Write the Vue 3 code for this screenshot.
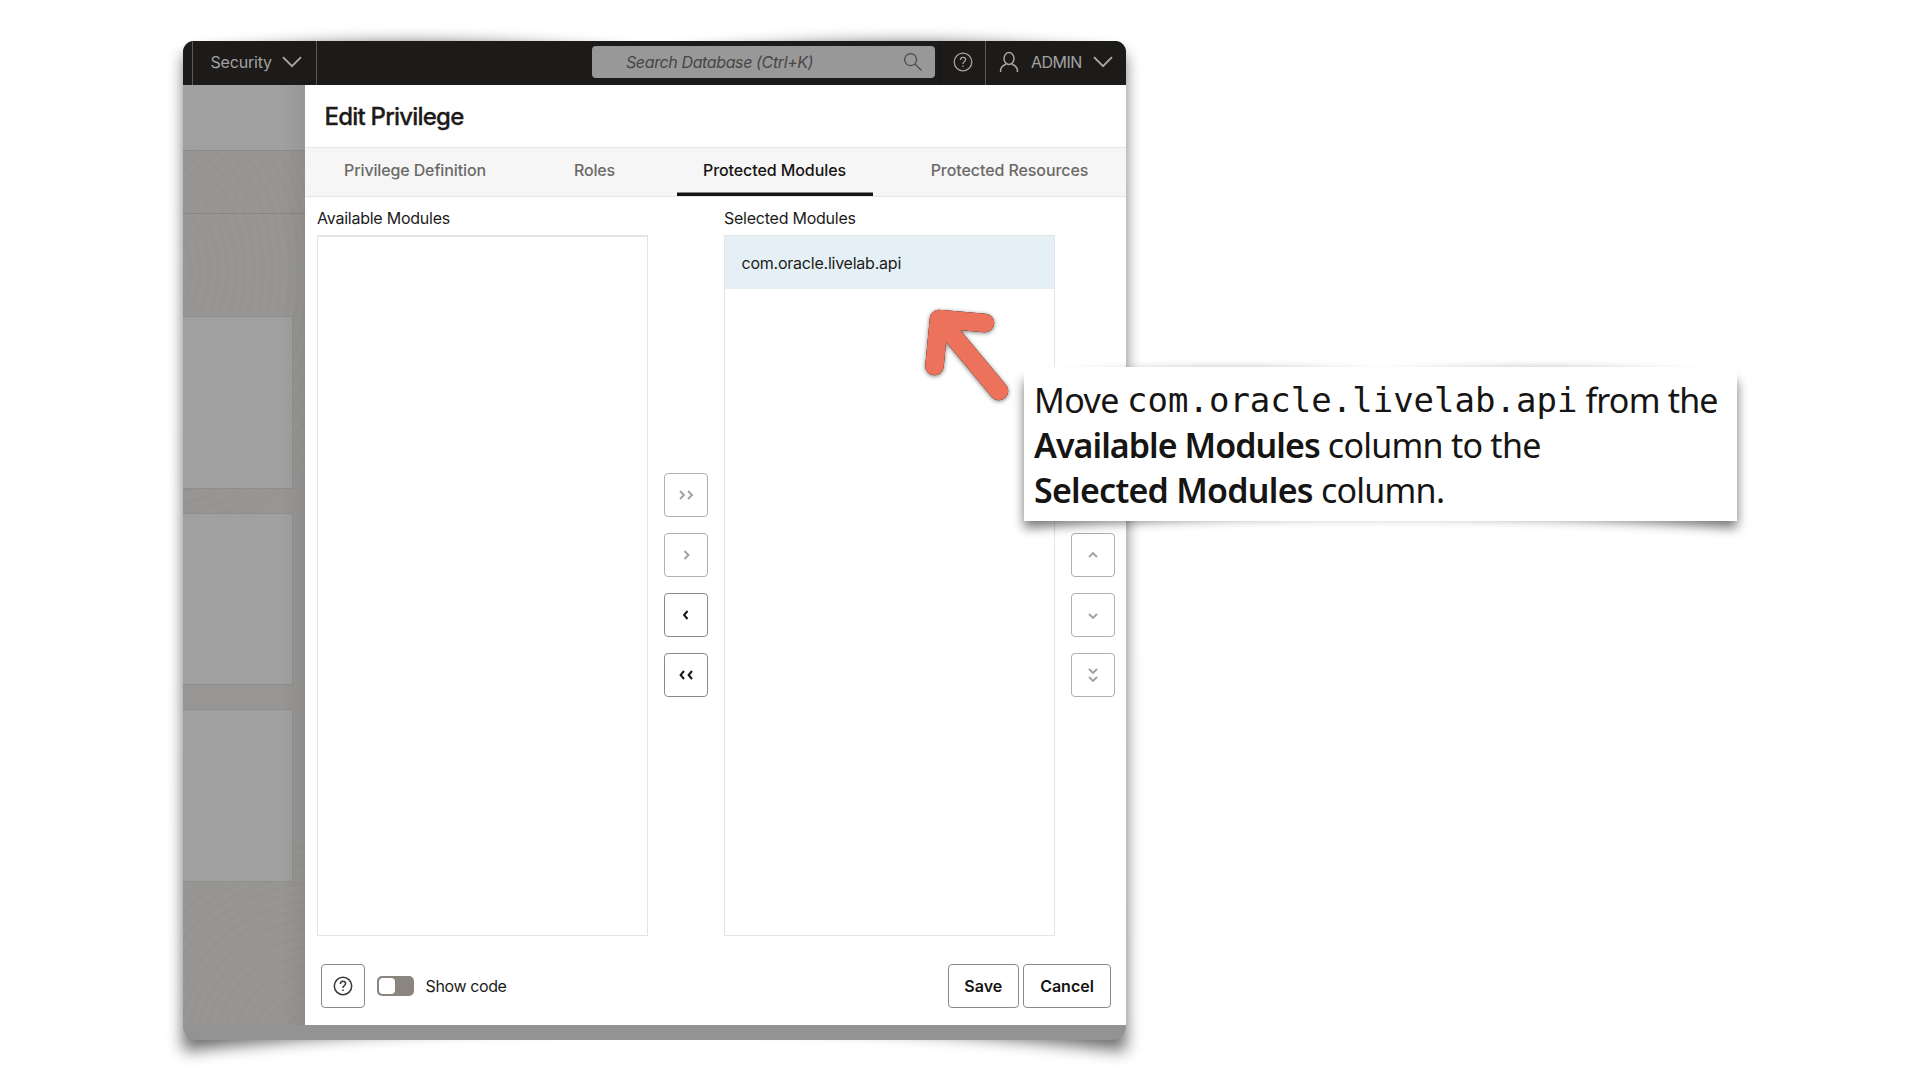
<script setup>
const tabs = [
  { label: 'Privilege Definition', cls: 'definition' },
  { label: 'Roles', cls: 'roles' },
  { label: 'Protected Modules', cls: 'modules' },
  { label: 'Protected Resources', cls: 'resources' },
]
const moveButtons = [
  { name: 'Move all right', paths: ['M-6-4l4 4-4 4', 'M2-4l4 4-4 4'], on: false },
  { name: 'Move right', paths: ['M-1.5-4l4 4-4 4'], on: false },
  { name: 'Move left', paths: ['M1.5-4l-3.4 4 3.4 4'], on: true },
  { name: 'Move all left', paths: ['M-2-4l-3.4 4 3.4 4', 'M6-4l-3.4 4 3.4 4'], on: true },
]
const orderButtons = [
  { name: 'Move to top', paths: ['M-4-2l4-4 4 4', 'M-4 6l4-4 4 4'] },
  { name: 'Move up', paths: ['M-4 2l4-4 4 4'] },
  { name: 'Move down', paths: ['M-4-1l4 4 4-4'] },
  { name: 'Move to bottom', paths: ['M-4-6l4 4 4-4', 'M-4 2l4 4 4-4'] },
]
const rings = Array.from({ length: 22 }, (_, i) => 20 + i * 9)
</script>

<template>
  <main class="stage">
    <svg class="shadow" width="1003" height="1064" viewBox="-30 -30 1003 1064">
      <defs>
        <filter id="soft" x="-10%" y="-10%" width="120%" height="120%"><feGaussianBlur stdDeviation="8" /></filter>
      </defs>
      <path d="M1 14Q236-12 472 16Q708-12 942 14L943 1010Q472 956 0 1010Z" fill="#000" opacity=".58" filter="url(#soft)" />
    </svg>
    <section class="window">
      <header class="topbar">
        <div class="security">
          <span>Security</span>
          <svg class="chev" width="20" height="12" viewBox="0 0 20 12"><path d="M1 1.2l9 9 9-9" /></svg>
        </div>
        <div class="search">
          <span>Search Database (Ctrl+K)</span>
          <svg width="20" height="20" viewBox="0 0 20 20"><circle cx="7.6" cy="7.6" r="6" /><path d="M12 12l6.5 6.5" /></svg>
        </div>
        <div class="help">
          <svg width="22" height="22" viewBox="0 0 22 22"><circle cx="11" cy="11" r="8.8" /><path d="M8.4 9q0-2.7 2.6-2.7t2.6 2.3q0 1.3-1.3 2.1T11 13.1M11 14.6v1.5" /></svg>
        </div>
        <div class="user">
          <svg width="20" height="22" viewBox="0 0 20 22"><ellipse cx="10" cy="7.6" rx="5" ry="6" /><path d="M1.6 21v-1.6q0-4 5.4-6.2M18.4 21v-1.6q0-4-5.4-6.2" /></svg>
          <span>ADMIN</span>
          <svg class="chev" width="20" height="12" viewBox="0 0 20 12"><path d="M1 1.2l9 9 9-9" /></svg>
        </div>
      </header>
      <div class="body">
        <aside class="backdrop">
          <svg class="texture" width="122" height="876" viewBox="0 0 122 876">
            <g v-for="(r, i) in rings" :key="i">
              <ellipse cx="-30" cy="120" :rx="r" :ry="r * 1.3" />
              <circle cx="140" cy="905" :r="r" />
            </g>
          </svg>
          <div class="band"></div>
          <div class="crumbs"></div>
          <div class="cards"><i></i><i></i><i></i></div>
        </aside>
        <section class="dialog">
          <h1><span>Edit Privilege</span></h1>
          <nav>
            <a v-for="t in tabs" :key="t.label" :class="t.cls"><span>{{ t.label }}</span></a>
          </nav>
          <div class="shuttle">
            <div class="column">
              <label>Available Modules</label>
              <div class="list first"></div>
            </div>
            <div class="controls">
              <button v-for="b in moveButtons" :key="b.name" :class="{ off: !b.on }" :aria-label="b.name">
                <svg width="24" height="24" viewBox="-12 -12 24 24"><path v-for="p in b.paths" :key="p" :d="p" /></svg>
              </button>
            </div>
            <div class="column">
              <label>Selected Modules</label>
              <div class="list"><div class="item"><span>com.oracle.livelab.api</span></div></div>
            </div>
            <div class="controls">
              <button v-for="b in orderButtons" :key="b.name" class="off" :aria-label="b.name">
                <svg width="24" height="24" viewBox="-12 -12 24 24"><path v-for="p in b.paths" :key="p" :d="p" /></svg>
              </button>
            </div>
          </div>
          <footer>
            <button class="info" aria-label="Help">
              <svg width="22" height="22" viewBox="0 0 22 22"><circle cx="11" cy="11" r="8.7" /><path d="M8.4 9q0-2.7 2.6-2.7t2.6 2.3q0 1.3-1.3 2.1T11 13.1M11 14.6v1.5" /></svg>
            </button>
            <div class="toggle"><i></i></div>
            <span class="show">Show code</span>
            <button class="save"><span>Save</span></button>
            <button class="cancel"><span>Cancel</span></button>
          </footer>
        </section>
      </div>
    </section>

    <svg class="arrow" width="100" height="110" viewBox="915 300 100 110">
      <path d="M999 391L939 319M985 323L939 319L934.5 366" />
    </svg>

    <div class="callout">
      <svg class="note-shadow" width="773" height="214" viewBox="-30 -30 773 214">
        <defs>
          <filter id="noteSoft" x="-10%" y="-20%" width="120%" height="140%"><feGaussianBlur stdDeviation="6" /></filter>
        </defs>
        <path d="M0 14Q178-4 356 10Q534-4 713 14L713 161Q356 136 0 161Z" fill="#000" opacity=".55" filter="url(#noteSoft)" />
      </svg>
      <div class="note">
        <p><span class="n1">Move </span><code>com.oracle.livelab.api</code><span class="n2"> from the</span></p>
        <p><b class="b1">Available Modules</b><span class="n3"> column to the</span></p>
        <p><b class="b2">Selected Modules</b><span class="n3"> column.</span></p>
      </div>
    </div>
  </main>
</template>

<style>
body { margin: 0; background: #fff; overflow: hidden; }
</style>

<style scoped>
* { box-sizing: border-box; }
.stage { position: relative; width: 1920px; height: 1080px; padding: 41px 0 0 183px; overflow: hidden; background: #fff; font: 16px/20px Inter, "Liberation Sans", sans-serif; color: #1c1b19; }
span, label, b, code { white-space: nowrap; }
svg { display: block; flex: none; fill: none; }
.shadow { position: absolute; left: 153px; top: 11px; }
.window { position: relative; width: 943px; height: 999px; border-radius: 11px 11px 14px 14px; overflow: hidden; display: flex; flex-direction: column; background: #939393; }
.topbar { height: 43.5px; flex: none; display: flex; align-items: center; padding-bottom: 1px; background: #1c1b19; color: #a3a2a1; margin-left: 9px; box-shadow: -9px 0 0 #1c1b19; }
.chev { stroke: #a9a8a7; stroke-width: 1.9; }
.security { width: 125px; height: 43.5px; margin-bottom: -1px; padding-bottom: 1px; display: flex; align-items: center; padding-left: 17.5px; border: solid #5a5957; border-width: 0 1px; }
.security span { width: 71.5px; letter-spacing: -.2px; }
.search { width: 343px; height: 32px; margin-left: 275px; padding: 0 12px 0 34px; border-radius: 4px; display: flex; align-items: center; justify-content: space-between; background: #989898; color: #474645; font-style: italic; letter-spacing: -.38px; }
.search svg { stroke: #4c4b4a; stroke-width: 1.3; }
.help { width: 46px; height: 43.5px; margin: 0 0 -1px 5px; padding: 0 0 1px 1px; border: solid #5a5957; border-width: 0 1px 0 0; box-shadow: inset 1px 0 #151412; display: grid; place-items: center; }
.help svg { stroke: #a3a2a1; stroke-width: 1.3; }
.user { display: flex; align-items: center; padding-left: 13px; }
.user svg { stroke: #a9a8a7; stroke-width: 1.5; }
.user span { width: 62px; margin-left: 12px; letter-spacing: -.5px; }
.user .chev { stroke-width: 1.9; }
.body { height: 940.5px; flex: none; display: flex; }
.backdrop { position: relative; width: 121.5px; flex: none; background: #979694; overflow: hidden; }
.backdrop::after { content: ""; position: absolute; inset: 0 0 0 auto; width: 24px; background: linear-gradient(90deg, transparent, rgba(0,0,0,.06)); }
.texture { position: absolute; left: 0; top: 65px; stroke: #959491; stroke-width: 3; }
.band { position: relative; height: 66.5px; background: #a0a0a0; border-bottom: 1px solid #8d8c8a; }
.crumbs { position: relative; height: 63px; border-bottom: 1px solid #878684; }
.cards { position: relative; padding-top: 102px; display: flex; flex-direction: column; gap: 24px; }
.cards i { width: 110px; height: 172.5px; background: #a0a0a0; border: solid #8f8e8d; border-width: 1px 1px 1px 0; }
.dialog { width: 821.5px; background: #fff; display: flex; flex-direction: column; }
h1 { margin: 0; height: 62px; padding: 17px 0 0 20px; font-size: 24px; line-height: 30px; font-weight: 500; letter-spacing: -.78px; -webkit-text-stroke: .3px; }
nav { height: 50px; display: flex; align-items: flex-start; background: #f6f6f6; border: solid #e6e6e6; border-width: 1px 0; font-weight: 500; color: #6b6a68; }
nav a { height: 48px; padding-top: 12px; display: flex; justify-content: center; letter-spacing: -.13px; }
.definition { width: 221px; }
.roles { width: 138px; }
.modules { width: 196px; margin-left: 13px; color: #161513; box-shadow: inset 0 -3.5px #161513; letter-spacing: -.08px; }
.resources { width: 196px; margin-left: 39px; letter-spacing: -.08px; }
.shuttle { height: 740px; padding: 16px 0 0 12.5px; display: flex; }
.column { width: 331px; flex: none; display: flex; flex-direction: column; }
.column label { height: 22px; line-height: 10px; letter-spacing: -.24px; }
.list { height: 701px; border: 1px solid #e4e4e4; }
.first { border-top-width: 2px; }
.item { height: 53px; padding: 17px 0 0 16.5px; background: #e4f0f5; letter-spacing: -.23px; }
.controls { width: 76px; flex: none; padding-top: 260px; display: flex; flex-direction: column; align-items: center; gap: 16px; }
button { height: 44px; width: 44px; padding: 0; border: 1.5px solid #8b8a89; border-radius: 4px; background: #fff; color: #161513; display: flex; align-items: center; justify-content: center; font: 600 16px/20px Inter, sans-serif; flex: none; }
button svg { stroke: #161513; stroke-width: 2; }
button.off { border-color: #b0b0af; }
button.off svg { stroke: #a2a1a0; stroke-width: 1.9; }
footer { flex: 1; display: flex; align-items: center; padding: 11px 15px 0 16.5px; }
.info svg { stroke: #3b3a38; stroke-width: 1.5; }
.toggle { width: 37px; height: 20px; margin-left: 11.5px; padding: 2px; border-radius: 5px; background: #8b8580; }
.toggle i { display: block; width: 16px; height: 16px; border-radius: 4px; background: #fff; }
.show { margin-left: 12px; letter-spacing: -.38px; }
.save { width: 71.5px; margin-left: auto; }
.cancel { width: 88px; margin-left: 4px; }
.arrow { position: absolute; left: 915px; top: 300px; stroke: #ec725c; stroke-width: 18.5; stroke-linecap: round; stroke-linejoin: round; filter: drop-shadow(0 0 .6px #000) drop-shadow(0 1px 2px rgba(0,0,0,.5)); }
.callout { position: absolute; left: 1024px; top: 367px; width: 713px; height: 154px; }
.note-shadow { position: absolute; left: -30px; top: -30px; }
.note { position: relative; height: 154px; padding: 11px 0 0 10px; background: #fff; color: #161513; font: 34px/45px "Noto Sans", sans-serif; }
.note p { margin: 0; height: 45px; display: flex; }
.note span, .note b { white-space: pre; }
.n1 { letter-spacing: -.6px; }
.n2 { letter-spacing: -.8px; }
.n3 { letter-spacing: -.75px; }
.note b { font-weight: 600; }
.b1 { letter-spacing: -.95px; }
.b2 { letter-spacing: -.75px; }
code { font: 34px/45px "DejaVu Sans Mono", monospace; }
</style>
